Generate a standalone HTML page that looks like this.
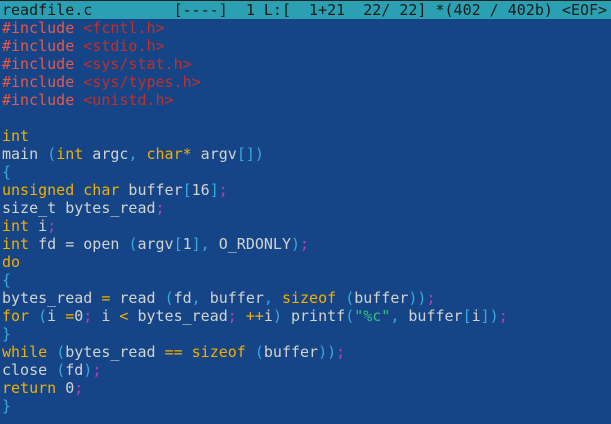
<!DOCTYPE html>
<html><head><meta charset="utf-8"><style>
html,body{margin:0;padding:0;background:#164587;width:611px;height:424px;overflow:hidden}
.t{position:absolute;top:0;left:0;width:611px;height:1px;background:#222}
pre{position:absolute;top:1px;left:2px;margin:0;font-family:"DejaVu Sans Mono","Liberation Mono",monospace;font-size:15px;line-height:18px;color:#d0d4d0;white-space:pre}
.bar{position:absolute;top:1px;left:0;width:611px;height:18px;background:#2ba0b2}
.s{color:#1a1a1a}
.r{color:#e8584a}.rd{color:#c0302a}
.y{color:#f0b000}.c{color:#3aa8e0}.m{color:#b83fb8}.g{color:#2ec47a}
</style></head><body>
<div class="t"></div><div class="bar"></div>
<pre><span class="s">readfile.c         [----]  1 L:[  1+21  22/ 22] *(402 / 402b) &lt;EOF&gt;</span>
<span class="r">#include</span> <span class="rd">&lt;fcntl.h&gt;</span>
<span class="r">#include</span> <span class="rd">&lt;stdio.h&gt;</span>
<span class="r">#include</span> <span class="rd">&lt;sys/stat.h&gt;</span>
<span class="r">#include</span> <span class="rd">&lt;sys/types.h&gt;</span>
<span class="r">#include</span> <span class="rd">&lt;unistd.h&gt;</span>

<span class="y">int</span>
main <span class="c">(</span><span class="y">int</span> argc<span class="c">,</span> <span class="y">char*</span> argv<span class="c">[])</span>
<span class="c">{</span>
<span class="y">unsigned char</span> buffer<span class="c">[</span>16<span class="c">]</span><span class="m">;</span>
size_t bytes_read<span class="m">;</span>
<span class="y">int</span> i<span class="m">;</span>
<span class="y">int</span> fd = open <span class="c">(</span>argv<span class="c">[</span>1<span class="c">],</span> O_RDONLY<span class="c">)</span><span class="m">;</span>
<span class="y">do</span>
<span class="c">{</span>
bytes_read <span class="y">=</span> read <span class="c">(</span>fd<span class="c">,</span> buffer<span class="c">,</span> <span class="y">sizeof</span> <span class="c">(</span>buffer<span class="c">))</span><span class="m">;</span>
<span class="y">for</span> <span class="c">(</span>i <span class="y">=</span>0<span class="m">;</span> i <span class="y">&lt;</span> bytes_read<span class="m">;</span> <span class="y">++</span>i<span class="c">)</span> printf<span class="c">(</span><span class="g">"%c"</span><span class="c">,</span> buffer<span class="c">[</span>i<span class="c">])</span><span class="m">;</span>
<span class="c">}</span>
<span class="y">while</span> <span class="c">(</span>bytes_read <span class="y">==</span> <span class="y">sizeof</span> <span class="c">(</span>buffer<span class="c">))</span><span class="m">;</span>
close <span class="c">(</span>fd<span class="c">)</span><span class="m">;</span>
<span class="y">return</span> 0<span class="m">;</span>
<span class="c">}</span>
</pre>
</body></html>
